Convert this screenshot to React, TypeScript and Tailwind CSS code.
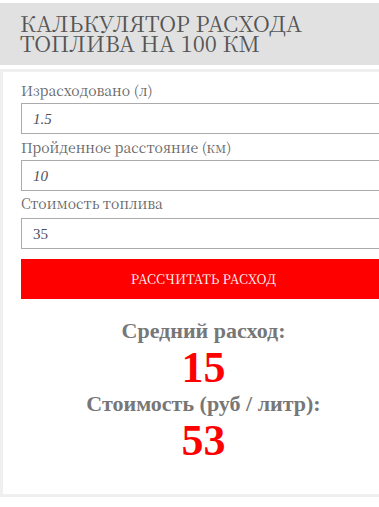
import React from "react";

function Field({ label, value, italic, cls }: { label: string; value: string; italic?: boolean; cls: string }) {
  return (
    <div className="flex flex-col">
      <div className={`font-['Noto_Serif_CJK_SC',serif] text-[14px] leading-[18px] text-[#666666] ${cls}`}>{label}</div>
      <div className="h-[31px] border border-[#ababab] bg-white flex items-center pl-[11px]">
        <span className={`text-[15px] leading-[18px] text-[#4f4f5c] ${italic ? "italic" : ""}`}>{value}</span>
      </div>
    </div>
  );
}

export default function App() {
  return (
    <div className="w-[379px] h-[507px] overflow-hidden bg-white font-['Liberation_Serif',serif]">
      <div className="w-[407px]">
        <div className="mt-[3px] w-[379px] bg-[#e1e1e1] pt-[10px] pb-[12px] pl-[20px]">
          <h1 className="font-['Noto_Serif_CJK_SC',serif] text-[22px] leading-[20px] text-[#555555] uppercase font-normal">
            Калькулятор расхода
            <br />
            топлива на 100 км
          </h1>
        </div>
        <div className="mt-[4px] border-[3px] border-[#efefef] px-[18px] pt-[9px] pb-[30px] flex flex-col">
          <Field label="Израсходовано (л)" value="1.5" italic cls="mb-[4px]" />
          <Field label="Пройденное расстояние (км)" value="10" italic cls="mt-[4px] mb-[4px]" />
          <Field label="Стоимость топлива" value="35" cls="mt-[3px] mb-[6px]" />
          <button className="mt-[10px] h-[40px] bg-[#ff0000] text-white text-[13px] uppercase font-['Noto_Serif_CJK_SC',serif]">
            Рассчитать расход
          </button>
          <div className="mt-[19px] flex flex-col items-center">
            <div className="text-[22px] leading-[26px] font-bold text-[#777777]">Средний расход:</div>
            <div className="text-[44px] leading-[47px] font-bold text-[#ff0000]">15</div>
            <div className="text-[22px] leading-[26px] font-bold text-[#777777]">Стоимость (руб / литр):</div>
            <div className="text-[44px] leading-[47px] font-bold text-[#ff0000]">53</div>
          </div>
        </div>
      </div>
    </div>
  );
}
